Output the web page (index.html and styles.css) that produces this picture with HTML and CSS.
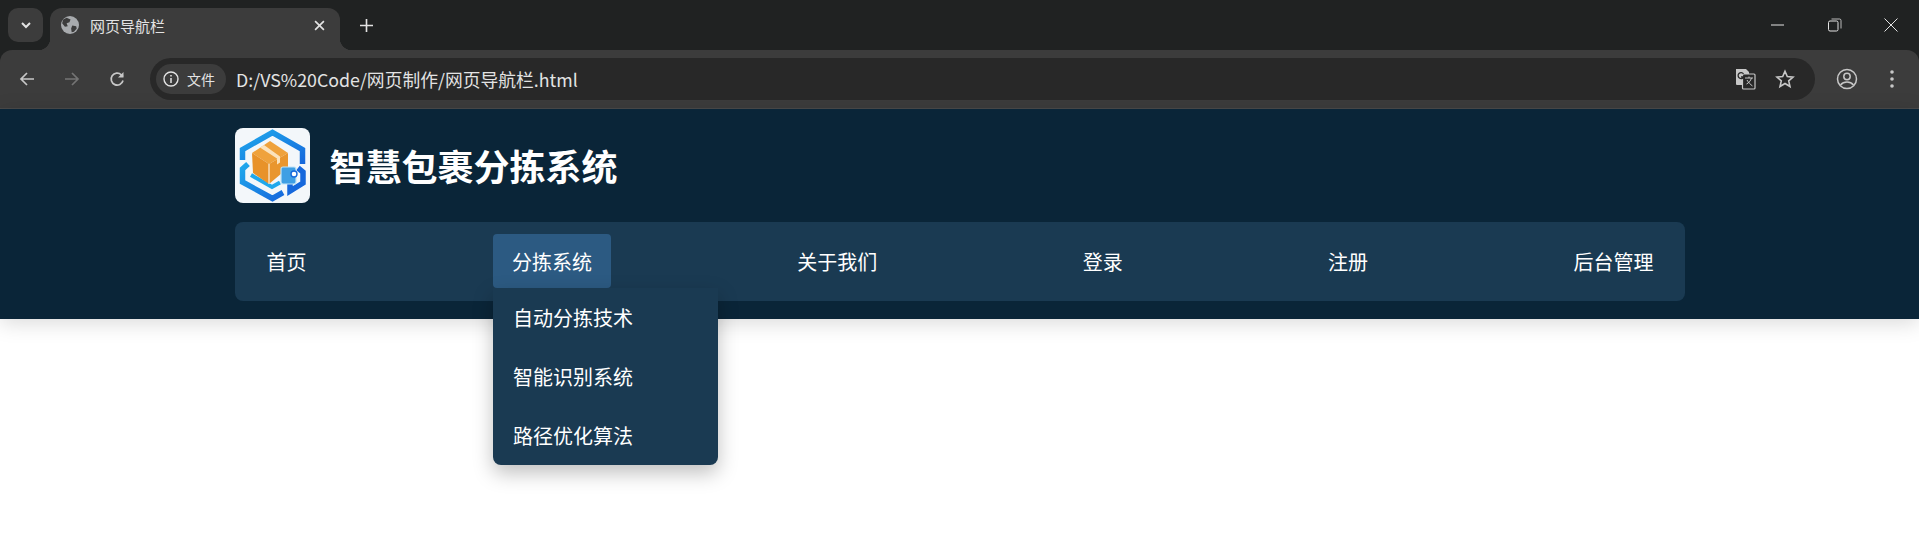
FILE: index.html
```html
<!DOCTYPE html>
<html lang="zh-CN">
<head>
    <meta charset="UTF-8">
    <meta name="viewport" content="width=device-width, initial-scale=1.0">
    <title>网页导航栏</title>
    <link rel="stylesheet" href="styles.css">
</head>
<body>
    <!-- browser frame -->
    <div class="browser-frame">
        <div class="tabstrip">
            <button class="tab-search">
                <svg width="14" height="14" viewBox="0 0 14 14"><path d="M3 5l4 4 4-4" fill="none" stroke="#e3e3e3" stroke-width="2"/></svg>
            </button>
            <div class="tab">
                <svg class="favicon" width="18" height="18" viewBox="0 0 16 16">
                    <circle cx="8" cy="8" r="8" fill="#a8abae"/>
                    <path d="M5 1.500 8.500 3 7.500 5.500 5 6.500 6 9 3.500 9.500 1 6.500 2 3zM10 8.500l3.500.5.500 2-2.500 3-2 .5-.5-3.500z" fill="#3c3c3c"/>
                </svg>
                <span class="tab-title">网页导航栏</span>
                <svg class="tab-close" width="11" height="11" viewBox="0 0 10 10"><path d="M1 1l8 8M9 1 1 9" stroke="#e3e3e3" stroke-width="1.500"/></svg>
            </div>
            <svg class="new-tab" width="13" height="13" viewBox="0 0 12 12"><path d="M6 0v12M0 6h12" stroke="#e3e3e3" stroke-width="1.500"/></svg>
            <div class="win-controls">
                <svg width="14" height="14" viewBox="0 0 14 14"><path d="M0 7h13" stroke="#e3e3e3"/></svg>
                <svg width="14" height="14" viewBox="0 0 14 14"><rect x=".5" y="3" width="9.500" height="10" rx="1.500" fill="none" stroke="#e3e3e3"/><path d="M3.500 1h8a1.500 1.500 0 0 1 1.500 1.500v8" fill="none" stroke="#e3e3e3" stroke-width=".8"/></svg>
                <svg width="14" height="14" viewBox="0 0 14 14"><path d="M.5.500l13 13M13.500.500l-13 13" stroke="#e3e3e3"/></svg>
            </div>
        </div>
        <div class="toolbar">
            <svg class="tool-icon" width="16" height="16" viewBox="0 0 16 16"><path d="M15 8H2M8 2 2 8l6 6" fill="none" stroke="#c7c7c7" stroke-width="1.700"/></svg>
            <svg class="tool-icon" width="16" height="16" viewBox="0 0 16 16"><path d="M1 8h13M8 2l6 6-6 6" fill="none" stroke="#747474" stroke-width="1.700"/></svg>
            <svg class="tool-icon" width="16" height="16" viewBox="0 0 16 16"><path d="M14 9.500A6 6 0 1 1 12.300 3.800L14 5.500" fill="none" stroke="#c7c7c7" stroke-width="1.700"/><path d="M14.500 1v5.500H9z" fill="#c7c7c7"/></svg>
            <div class="omnibox">
                <div class="chip">
                    <svg width="16" height="16" viewBox="0 0 16 16"><circle cx="8" cy="8" r="7" fill="none" stroke="#e3e3e3" stroke-width="1.400"/><path d="M8 7v5M8 4v1.500" stroke="#e3e3e3" stroke-width="1.500"/></svg>
                    <span>文件</span>
                </div>
                <span class="url">D:/VS%20Code/网页制作/网页导航栏.html</span>
                <svg class="translate" width="22" height="22" viewBox="0 0 22 22">
                    <path d="M2 1h10l3 3v13H3a1 1 0 0 1-1-1z" fill="#c7c7c7"/>
                    <rect x="8.500" y="6" width="12.500" height="15" rx="1" fill="#282828" stroke="#c7c7c7" stroke-width="1.200"/>
                    <path d="M11 10h8M15 8.500V10M17.500 10c-.8 3-3 5-5 6M13 12c1 2 3.500 4.500 5.500 6" fill="none" stroke="#c7c7c7"/>
                    <path d="M9.500 5.800A3 3 0 1 0 9.800 9H7" fill="none" stroke="#282828" stroke-width="1.300"/>
                </svg>
                <svg class="star" width="20" height="20" viewBox="0 0 20 20"><path d="M10 2.300l2.300 5.300 5.700.5-4.300 3.800 1.300 5.600-5-3-5 3 1.300-5.600L2 8.100l5.700-.5z" fill="none" stroke="#c7c7c7" stroke-width="1.600"/></svg>
            </div>
            <svg class="profile" width="22" height="22" viewBox="0 0 22 22"><circle cx="11" cy="11" r="9.500" fill="none" stroke="#c7c7c7" stroke-width="1.500"/><circle cx="11" cy="8.500" r="3.200" fill="none" stroke="#c7c7c7" stroke-width="1.500"/><path d="M4.500 17c2-2.500 4-3 6.500-3s4.500.5 6.500 3" fill="none" stroke="#c7c7c7" stroke-width="1.500"/></svg>
            <svg class="menu-dots" width="6" height="20" viewBox="0 0 6 20"><circle cx="3" cy="3" r="1.800" fill="#c7c7c7"/><circle cx="3" cy="10" r="1.800" fill="#c7c7c7"/><circle cx="3" cy="17" r="1.800" fill="#c7c7c7"/></svg>
        </div>
    </div>

    <!-- page -->
    <header class="site-header">
        <div class="container">
            <div class="brand">
                <div class="logo">
                    <svg width="75" height="75" viewBox="0 0 75 75">
                        <defs>
                            <linearGradient id="hex" x1="0" y1="0" x2="1" y2="1">
                                <stop offset="0" stop-color="#1fa8ec"/>
                                <stop offset="1" stop-color="#1668dc"/>
                            </linearGradient>
                        </defs>
                        <path d="M7.500 32V21.500L37.500 4.500 67.500 21.500V36" fill="none" stroke="url(#hex)" stroke-width="5.500"/>
                        <path d="M13 36 7.500 41v13L37.500 70.500 48 64.500" fill="none" stroke="url(#hex)" stroke-width="5.500"/>
                        <path d="M16 47l21 12 8-4.500" fill="none" stroke="#1fa8ec" stroke-width="4"/>
                        <path d="M63 40l5 4v11l-13 8V54" fill="none" stroke="#1668dc" stroke-width="5.500"/>
                        <path d="M17 25 35 13l18 12-19 11z" fill="#efa23c"/>
                        <path d="M17 25l17 11v20L18 45z" fill="#e8922a"/>
                        <path d="M34 36l19-11v15L34 56z" fill="#e9962e"/>
                        <path d="M25 19.500l17 11v6l3-2v-6L29 17z" fill="#fbe3bd"/>
                        <path d="M34 36v20" stroke="#fff" stroke-width="1"/>
                        <rect x="46" y="39" width="15" height="17" rx="2" fill="#3f9fe4" stroke="#bfe3f7" stroke-width="1.200"/>
                        <circle cx="59" cy="46" r="3" fill="#fff" stroke="#1668dc" stroke-width="1.400"/>
                    </svg>
                </div>
                <h1 class="site-title">智慧包裹分拣系统</h1>
            </div>
            <nav class="main-nav">
                <ul class="nav-list">
                    <li><a href="#">首页</a></li>
                    <li class="has-drop">
                        <a href="#" class="active">分拣系统</a>
                        <ul class="dropdown">
                            <li><a href="#">自动分拣技术</a></li>
                            <li><a href="#">智能识别系统</a></li>
                            <li><a href="#">路径优化算法</a></li>
                        </ul>
                    </li>
                    <li><a href="#">关于我们</a></li>
                    <li><a href="#">登录</a></li>
                    <li><a href="#">注册</a></li>
                    <li><a href="#">后台管理</a></li>
                </ul>
            </nav>
        </div>
    </header>
</body>
</html>
```

FILE: styles.css
```css
* { box-sizing: border-box; margin: 0; padding: 0; }
html, body { height: 100%; }
body {
    background: #fff;
    font-family: "Noto Sans CJK SC", "Noto Sans", sans-serif;
}
ul { list-style: none; }
a { text-decoration: none; color: #fff; }

/* browser frame */
.browser-frame { background: #202222; }
.tabstrip {
    height: 50px;
    display: flex;
    align-items: flex-start;
    padding: 8px 0 0 8px;
}
.tab-search {
    width: 35px;
    height: 34px;
    border: 0;
    border-radius: 10px;
    background: #3c3c3c;
    display: flex;
    align-items: center;
    justify-content: center;
}
.tab {
    position: relative;
    width: 290px;
    height: 42px;
    margin-left: 7px;
    padding: 0 15px 8px 11px;
    background: #3c3c3c;
    border-radius: 12px 12px 0 0;
    display: flex;
    align-items: center;
}
.tab::before,
.tab::after {
    content: "";
    position: absolute;
    bottom: 0;
    width: 12px;
    height: 12px;
}
.tab::before {
    left: -12px;
    background: radial-gradient(circle at 0 0, transparent 12px, #3c3c3c 12.5px);
}
.tab::after {
    right: -12px;
    background: radial-gradient(circle at 100% 0, transparent 12px, #3c3c3c 12.5px);
}
.tab-title {
    flex: 1;
    margin-left: 11px;
    font-size: 15px;
    color: #e3e3e3;
}
.new-tab { margin: 11px 0 0 20px; }
.win-controls {
    margin-left: auto;
    width: 148px;
    padding: 10px 21px 0 0;
    display: flex;
    justify-content: space-between;
}
.toolbar {
    height: 59px;
    background: #3c3c3c;
    border-radius: 12px 12px 0 0;
    display: flex;
    align-items: center;
    padding: 0 19px 0 19px;
    border-bottom: 1px solid #4a4a4a;
}
.tool-icon { margin-right: 29px; }
.tool-icon:nth-of-type(3) { margin-right: 25px; }
.omnibox {
    width: 1665px;
    height: 42px;
    background: #282828;
    border-radius: 21px;
    display: flex;
    align-items: center;
    padding: 0 20px 0 6px;
}
.chip {
    width: 70px;
    height: 30px;
    background: #3c3c3c;
    border-radius: 15px;
    display: flex;
    align-items: center;
    padding-left: 7px;
    gap: 8px;
    font-size: 14px;
    color: #e3e3e3;
}
.url {
    flex: 1;
    margin-left: 10px;
    font-size: 17.8px;
    color: #e3e3e3;
}
.translate { margin-right: 19px; }
.profile { margin-left: 21px; }
.menu-dots { margin-left: 31px; }

/* page header */
.site-header {
    background: #0a2538;
    height: 210px;
    padding-top: 19px;
    box-shadow: 0 4px 20px rgba(0, 0, 0, 0.15);
}
.container {
    width: 1450px;
    margin: 0 auto;
}
.brand {
    display: flex;
    align-items: center;
    gap: 20px;
    margin-bottom: 19px;
}
.logo {
    width: 75px;
    height: 75px;
    background: #f3f7fa;
    border-radius: 8px;
    overflow: hidden;
}
.logo svg { display: block; }
.site-title {
    font-size: 36px;
    font-weight: 700;
    color: #fff;
    line-height: 1.2;
}
.main-nav {
    background: #1a3a52;
    border-radius: 8px;
    height: 79px;
    padding: 12px 12px 12px 13px;
}
.nav-list {
    display: flex;
    justify-content: space-between;
}
.nav-list > li { position: relative; }
.nav-list > li > a {
    display: block;
    height: 54px;
    line-height: 55px;
    padding: 0 19px;
    font-size: 20px;
    border-radius: 4px;
}
.nav-list .active { background: #2c5a82; }
.dropdown {
    position: absolute;
    top: 54px;
    left: 0;
    width: 225px;
    background: #1a3a52;
    border-radius: 0 0 8px 8px;
    box-shadow: 0 8px 20px rgba(0, 0, 0, 0.25);
    z-index: 10;
}
.dropdown a {
    display: block;
    height: 59px;
    line-height: 59px;
    padding-left: 20px;
    font-size: 20px;
}
```
